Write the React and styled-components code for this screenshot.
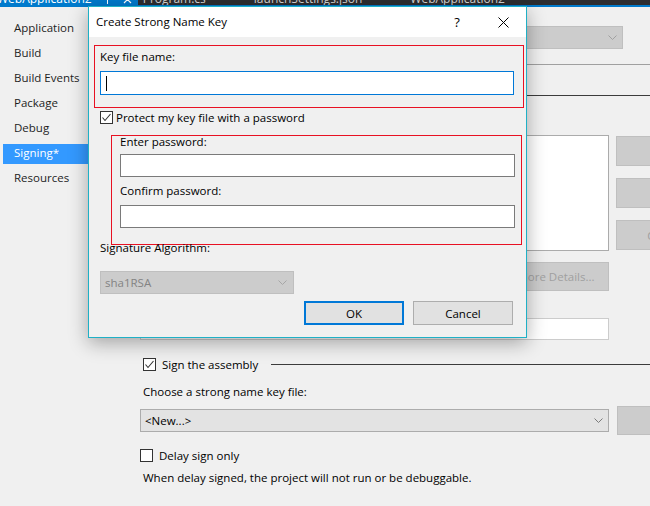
import styled, { createGlobalStyle } from 'styled-components'

const FONT = `"Segoe UI", "Open Sans", sans-serif`

const GlobalStyle = createGlobalStyle`
  html, body { margin: 0; padding: 0; background: #f0f0f0; }
  body { font-family: ${FONT}; font-size: 11.5px; color: #000; }
  * { box-sizing: border-box; }
`

const Chevron = ({ color = '#7a7a7a' }) => (
  <svg width="9" height="5" viewBox="0 0 9 5">
    <path d="M0.5 0.5 L4.5 4.5 L8.5 0.5" fill="none" stroke={color} strokeWidth="1" />
  </svg>
)

const Check = ({ checked }) => (
  <CheckBox>
    {checked && (
      <svg width="11" height="11" viewBox="0 0 11 11">
        <path d="M1.5 5.5 L4 8.5 L9.5 2" fill="none" stroke="#333" strokeWidth="1.1" />
      </svg>
    )}
  </CheckBox>
)

const App = () => {
  return (
    <>
      <GlobalStyle />
      <Page>
        <TabStrip>
          <Tab $active $first>
            WebApplication2
            <TabIcon>
              <svg width="9" height="9" viewBox="0 0 9 9">
                <path d="M1 4.5 H8 M4.5 4.5 V9" stroke="#fff" strokeWidth="1" />
              </svg>
            </TabIcon>
            <TabIcon>
              <svg width="9" height="9" viewBox="0 0 9 9">
                <path d="M1 1 L8 8 M8 1 L1 8" stroke="#fff" strokeWidth="1.2" />
              </svg>
            </TabIcon>
          </Tab>
          <Tab>Program.cs</Tab>
          <Tab>launchSettings.json</Tab>
          <Tab>WebApplication2</Tab>
        </TabStrip>
        <TabLine />

        <Main>
          <Sidebar>
            {['Application', 'Build', 'Build Events', 'Package', 'Debug', 'Signing*', 'Resources'].map(n => (
              <NavItem key={n} $active={n === 'Signing*'}>{n}</NavItem>
            ))}
          </Sidebar>

          <Content>
            <TopRow>
              <Text>Configuration:</Text>
              <PageSelect $w={110} $disabled>N/A<Chevron color="#a0a0a0" /></PageSelect>
              <Text>Platform:</Text>
              <PageSelect $w={200} $disabled>N/A<Chevron color="#a0a0a0" /></PageSelect>
            </TopRow>
            <Separator />

            <Header $top={24}>
              <Check />
              <HeaderLabel>Sign the ClickOnce manifests</HeaderLabel>
              <HeaderLine />
            </Header>

            <CertRow>
              <CertBox>
                <Text>Issued To (none)</Text>
                <Text>Issued By (none)</Text>
                <Text>Intended Purpose (none)</Text>
                <Text>Expiration Date (none)</Text>
              </CertBox>
              <CertButtons>
                <PageButton>Select from Store...</PageButton>
                <PageButton>Select from File...</PageButton>
                <PageButton>Create Test Certificate...</PageButton>
              </CertButtons>
            </CertRow>
            <MoreRow>
              <PageButton $w={106} $h={29}>More Details...</PageButton>
            </MoreRow>
            <Text $top={8} $left={3}>Timestamp server URL:</Text>
            <UrlInput />

            <Header $top={18}>
              <Check checked />
              <HeaderLabel>Sign the assembly</HeaderLabel>
              <HeaderLine />
            </Header>
            <Text $top={13} $left={3}>Choose a strong name key file:</Text>
            <KeyRow>
              <PageSelect $w={469}>&lt;New...&gt;<Chevron /></PageSelect>
              <PageButton $w={190} $h={29}>Change Password...</PageButton>
            </KeyRow>
            <DelayRow>
              <Check />
              <CheckLabel>Delay sign only</CheckLabel>
            </DelayRow>
            <Text $top={8} $left={3}>When delay signed, the project will not run or be debuggable.</Text>
          </Content>
        </Main>

        <Dialog>
          <TitleBar>
            <Title>Create Strong Name Key</Title>
            <TitleButton>?</TitleButton>
            <TitleButton>
              <svg width="11" height="11" viewBox="0 0 11 11">
                <path d="M0.5 0.5 L10.5 10.5 M10.5 0.5 L0.5 10.5" stroke="#000" strokeWidth="1" />
              </svg>
            </TitleButton>
          </TitleBar>
          <DialogBody>
            <Highlight $w={430} $ml={-6} $pad="3px 0 12px 5px">
              <Text>Key file name:</Text>
              <Field $w={414} $h={24} $top={6} $focus><Caret /></Field>
            </Highlight>
            <CheckRow>
              <Check checked />
              <CheckLabel $gap={3}>Protect my key file with a password</CheckLabel>
            </CheckRow>
            <Highlight $w={411} $ml={11} $top={10} $pad="0 0 16px 8px">
              <Text $top={-2}>Enter password:</Text>
              <Field $w={395} $h={23} $top={4} />
              <Text $top={6}>Confirm password:</Text>
              <Field $w={395} $h={23} $top={6} />
            </Highlight>
            <Text $top={-5}>Signature Algorithm:</Text>
            <AlgoSelect>sha1RSA<Chevron color="#a6a6a6" /></AlgoSelect>
            <ButtonRow>
              <DialogButton $default>OK</DialogButton>
              <DialogButton>Cancel</DialogButton>
            </ButtonRow>
          </DialogBody>
        </Dialog>
      </Page>
    </>
  )
}

export default App

const Page = styled.div`
  position: relative;
  width: 650px;
  height: 506px;
  overflow: hidden;
  background: #f0f0f0;
`

const TabStrip = styled.div`
  height: 5px;
  background: #2d2d30;
  display: flex;
  align-items: flex-end;
  overflow: hidden;
`

const Tab = styled.div`
  flex: none;
  height: 12px;
  line-height: 12px;
  display: flex;
  align-items: center;
  font-size: 12px;
  color: ${p => (p.$active ? '#ffffff' : '#d6d6d6')};
  background: ${p => (p.$active ? '#007acc' : 'transparent')};
  padding: ${p => (p.$first ? '0 6px 0 0' : '0 43px 0 5px')};
  margin-left: ${p => (p.$first ? '-3px' : '0')};
`

const TabIcon = styled.span`
  display: flex;
  margin-left: 11px;
`

const TabLine = styled.div`
  height: 2px;
  background: #007acc;
`

const Main = styled.div`
  display: flex;
  height: 499px;
`

const Sidebar = styled.div`
  width: 125px;
  flex: none;
  padding-top: 12px;
`

const NavItem = styled.div`
  height: 20px;
  line-height: 17px;
  margin: 0 0 5px 3px;
  padding-left: 11px;
  color: ${p => (p.$active ? '#ffffff' : '#1e1e1e')};
  background: ${p => (p.$active ? '#3399ff' : 'transparent')};
`

const Content = styled.div`
  flex: 1;
  min-width: 0;
  padding: 19px 0 0 15px;
  display: flex;
  flex-direction: column;
`

const Text = styled.div`
  line-height: 16px;
  white-space: nowrap;
  margin-top: ${p => p.$top || 0}px;
  margin-left: ${p => p.$left || 0}px;
`

const TopRow = styled.div`
  display: flex;
  align-items: center;
  gap: 8px;
  height: 23px;
  padding-right: 27px;
  & > :nth-child(3) { margin-left: auto; }
`

const PageSelect = styled.div`
  flex: none;
  width: ${p => p.$w}px;
  height: 23px;
  display: flex;
  align-items: center;
  justify-content: space-between;
  padding: 0 5px 0 4px;
  background: ${p => (p.$disabled ? '#cccccc' : '#e3e3e3')};
  border: 1px solid ${p => (p.$disabled ? '#bfbfbf' : '#acacac')};
  color: ${p => (p.$disabled ? '#838383' : '#000')};
`

const Separator = styled.div`
  height: 1px;
  margin-top: 15px;
  background: #a0a0a0;
`

const Header = styled.div`
  display: flex;
  align-items: center;
  height: 13px;
  margin-top: ${p => p.$top}px;
  padding-left: 3px;
`

const HeaderLabel = styled.span`
  margin-left: 6px;
  white-space: nowrap;
`

const HeaderLine = styled.div`
  flex: 1;
  height: 1px;
  margin-left: 13px;
  background: #3c3c3c;
`

const CheckBox = styled.span`
  flex: none;
  width: 13px;
  height: 13px;
  display: inline-flex;
  align-items: center;
  justify-content: center;
  border: 1px solid #333;
  background: #fff;
`

const CertRow = styled.div`
  display: flex;
  gap: 7px;
  margin-top: 33px;
`

const CertBox = styled.div`
  flex: none;
  width: 469px;
  height: 116px;
  padding: 6px 8px;
  background: #fff;
  border: 1px solid #ababab;
`

const CertButtons = styled.div`
  display: flex;
  flex-direction: column;
  gap: 12px;
  padding-top: 1px;
`

const PageButton = styled.div`
  flex: none;
  width: ${p => p.$w || 190}px;
  height: ${p => p.$h || 30}px;
  display: flex;
  align-items: center;
  justify-content: center;
  white-space: nowrap;
  background: #cccccc;
  border: 1px solid #bfbfbf;
  color: #a0a0a0;
`

const MoreRow = styled.div`
  display: flex;
  justify-content: flex-end;
  width: 469px;
  margin-top: 11px;
`

const UrlInput = styled.div`
  width: 469px;
  height: 22px;
  margin-top: 3px;
  background: #fff;
  border: 1px solid #cccccc;
`

const KeyRow = styled.div`
  display: flex;
  align-items: center;
  gap: 8px;
  margin-top: 6px;
  height: 29px;
`

const DelayRow = styled.div`
  display: flex;
  align-items: center;
  height: 13px;
  margin-top: 14px;
`

const CheckLabel = styled.span`
  margin-left: ${p => p.$gap || 6}px;
  white-space: nowrap;
`

const Dialog = styled.div`
  position: absolute;
  left: 88px;
  top: 6px;
  width: 439px;
  height: 332px;
  display: flex;
  flex-direction: column;
  background: #f0f0f0;
  border: 1px solid #1fb0c6;
  box-shadow: 0 5px 18px rgba(0, 0, 0, 0.32);
`

const TitleBar = styled.div`
  height: 30px;
  display: flex;
  background: #fff;
`

const Title = styled.div`
  flex: 1;
  padding-left: 7px;
  line-height: 30px;
  font-size: 11.5px;
`

const TitleButton = styled.div`
  width: 46px;
  display: flex;
  align-items: center;
  justify-content: center;
  font-size: 13px;
`

const DialogBody = styled.div`
  padding: 8px 0 0 11px;
  display: flex;
  flex-direction: column;
`

const Highlight = styled.div`
  width: ${p => p.$w}px;
  margin-left: ${p => p.$ml}px;
  margin-top: ${p => p.$top || 0}px;
  padding: ${p => p.$pad};
  border: 1px solid #e81123;
`

const Field = styled.div`
  width: ${p => p.$w}px;
  height: ${p => p.$h}px;
  margin-top: ${p => p.$top}px;
  display: flex;
  align-items: center;
  padding-left: 5px;
  background: #fff;
  border: 1px solid ${p => (p.$focus ? '#0078d7' : '#7a7a7a')};
`

const Caret = styled.span`
  width: 1px;
  height: 15px;
  background: #000;
`

const CheckRow = styled.div`
  display: flex;
  align-items: center;
  height: 16px;
  margin-top: 1px;
`

const AlgoSelect = styled.div`
  width: 194px;
  height: 23px;
  margin-top: 15px;
  display: flex;
  align-items: center;
  justify-content: space-between;
  padding: 0 6px 0 4px;
  background: #cccccc;
  border: 1px solid #bfbfbf;
  color: #838383;
`

const ButtonRow = styled.div`
  display: flex;
  justify-content: flex-end;
  gap: 9px;
  margin-top: 7px;
  padding-right: 13px;
`

const DialogButton = styled.div`
  width: 100px;
  height: 24px;
  display: flex;
  align-items: center;
  justify-content: center;
  background: #e1e1e1;
  border: ${p => (p.$default ? '2px solid #0078d7' : '1px solid #adadad')};
`
